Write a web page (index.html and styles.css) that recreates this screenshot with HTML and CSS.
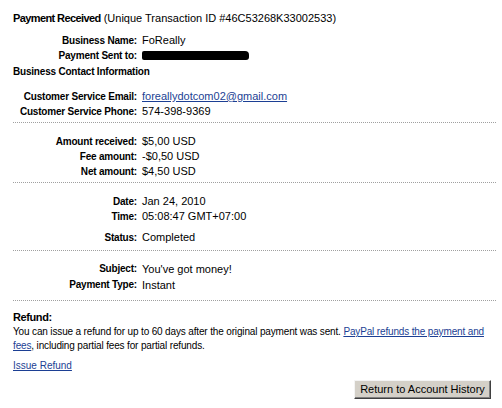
FILE: index.html
```html
<!DOCTYPE html>
<html lang="en">
<head>
    <meta charset="UTF-8">
    <title>Payment Received</title>
    <link rel="stylesheet" href="styles.css">
</head>
<body>
    <div class="page">
        <p class="title"><b>Payment Received</b> (Unique Transaction ID #46C53268K33002533)</p>

        <div class="rows">
            <div class="row"><span class="label">Business Name:</span><span>FoReally</span></div>
            <div class="row"><span class="label">Payment Sent to:</span><span class="redacted"></span></div>
        </div>
        <p class="subhead">Business Contact Information</p>

        <div class="rows contact">
            <div class="row"><span class="label">Customer Service Email:</span><a href="#">foreallydotcom02@gmail.com</a></div>
            <div class="row"><span class="label">Customer Service Phone:</span><span>574-398-9369</span></div>
        </div>

        <hr class="dots">

        <div class="rows amounts">
            <div class="row"><span class="label">Amount received:</span><span>$5,00 USD</span></div>
            <div class="row"><span class="label">Fee amount:</span><span>-$0,50 USD</span></div>
            <div class="row"><span class="label">Net amount:</span><span>$4,50 USD</span></div>
        </div>

        <hr class="dots">

        <div class="rows dates">
            <div class="row"><span class="label">Date:</span><span>Jan 24, 2010</span></div>
            <div class="row"><span class="label">Time:</span><span>05:08:47 GMT+07:00</span></div>
            <div class="row status"><span class="label">Status:</span><span>Completed</span></div>
        </div>

        <hr class="dots">

        <div class="rows subject">
            <div class="row"><span class="label">Subject:</span><span>You've got money!</span></div>
            <div class="row"><span class="label">Payment Type:</span><span>Instant</span></div>
        </div>

        <hr class="dots">

        <div class="refund">
            <b>Refund:</b><br>
            You can issue a refund for up to 60 days after the original payment was sent. <a href="#">PayPal refunds the payment and fees</a>, including partial fees for partial refunds.
        </div>

        <p class="issue"><a href="#">Issue Refund</a></p>

        <div class="actions">
            <button type="button">Return to Account History</button>
        </div>
    </div>
</body>
</html>
```

FILE: styles.css
```css
body {
    margin: 0;
    font-family: "Liberation Sans", Arial, sans-serif;
    font-size: 11px;
    color: #000;
    background: #fff;
}

.page {
    padding: 11px 6px 0 13px;
}

p {
    margin: 0;
}

.title {
    line-height: 14px;
}

.title b {
    letter-spacing: -0.6px;
}

.rows {
    display: grid;
    grid-template-columns: 124px auto;
    column-gap: 5px;
    margin-top: 8px;
}

.row {
    display: contents;
}

.row span,
.row a {
    line-height: 15px;
    white-space: nowrap;
}

.label {
    text-align: right;
    font-weight: bold;
    font-size: 10px;
    letter-spacing: -0.2px;
}

.redacted {
    display: block;
    width: 107px;
    height: 9px;
    margin-top: 3px;
    background: #000;
    border-radius: 2px 4px 3px 2px;
}

.subhead {
    font-weight: bold;
    font-size: 10px;
    letter-spacing: -0.2px;
    line-height: 16px;
    margin-top: 1px;
}

.contact {
    margin-top: 9px;
}

a {
    color: #1c3f94;
}

.dots {
    border: 0;
    border-top: 1px dotted #a0a0a0;
    margin: 3px 0 0;
}

.amounts {
    margin-top: 0;
    padding-top: 11px;
}

.dates {
    margin-top: 0;
    padding-top: 11px;
    padding-bottom: 2px;
}

.subject {
    margin-top: 0;
    padding-top: 10px;
    padding-bottom: 4px;
}

.subject .row span {
    line-height: 16px;
}

.status span {
    padding-top: 6px;
}

.refund {
    font-size: 10px;
    letter-spacing: -0.15px;
    line-height: 14px;
    margin-top: 9px;
}

.refund b {
    font-size: 11px;
    letter-spacing: -0.4px;
}

.issue {
    font-size: 10px;
    margin-top: 6px;
    line-height: 14px;
}

.actions {
    display: flex;
    justify-content: flex-end;
    padding-right: 5px;
    margin-top: 7px;
}

button {
    font-family: "Liberation Sans", Arial, sans-serif;
    font-size: 11px;
    background: #d4d0c8;
    color: #000;
    border: 1px solid;
    border-color: #f4f4f4 #404040 #404040 #f4f4f4;
    box-shadow: inset -1px -1px 0 #808080;
    padding: 2px 4px 3px;
    width: 137px;
}
```
